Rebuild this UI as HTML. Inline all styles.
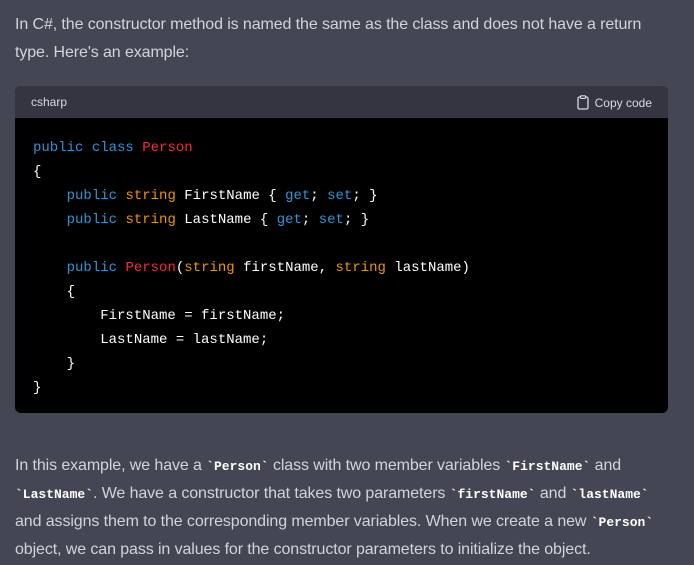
<!DOCTYPE html>
<html><head><meta charset="utf-8"><style>
html,body{margin:0;padding:0;width:694px;height:565px;overflow:hidden;background:#444654;}
.t{position:absolute;left:15px;font-family:"Liberation Sans",sans-serif;font-size:16px;color:#d1d5db;white-space:nowrap;letter-spacing:-0.1px;line-height:28px;}
.block{position:absolute;left:15px;top:86px;width:653px;height:327px;background:#000;border-radius:6px;overflow:hidden;}
.hdr{height:32px;background:#343541;position:relative;font-family:"Liberation Sans",sans-serif;font-size:12px;color:#d9d9e3;}
.hdr .l{position:absolute;left:16px;top:9px;}
.hdr .r{position:absolute;right:16px;top:9px;}
pre{margin:0;position:absolute;left:18px;top:50px;font-family:"Liberation Mono",monospace;font-size:14px;line-height:24px;color:#fff;}
.k{color:#2e95d3}.s{color:#e9950c}.c{color:#f22c3d}
code{font-family:"Liberation Mono",monospace;font-weight:bold;color:#fff;font-size:13px;letter-spacing:0;}
</style></head><body>
<div class="t" style="top:11px">In C#, the constructor method is named the same as the class and does not have a return</div>
<div class="t" style="top:39px">type. Here's an example:</div>
<div class="block">
<div class="hdr"><span class="l">csharp</span>
<span class="r"><svg width="12" height="15" viewBox="0 0 12 15" style="vertical-align:-3px;margin-right:6px"><rect x="1" y="2" width="10" height="12" rx="1.5" fill="none" stroke="#d9d9e3" stroke-width="1.3"/><rect x="3.5" y="0.8" width="5" height="2.6" rx="0.6" fill="#343541" stroke="#d9d9e3" stroke-width="1.1"/></svg>Copy code</span></div>
<pre><span class="k">public</span> <span class="k">class</span> <span class="c">Person</span>
{
    <span class="k">public</span> <span class="s">string</span> FirstName { <span class="k">get</span>; <span class="k">set</span>; }
    <span class="k">public</span> <span class="s">string</span> LastName { <span class="k">get</span>; <span class="k">set</span>; }

    <span class="k">public</span> <span class="c">Person</span>(<span class="s">string</span> firstName, <span class="s">string</span> lastName)
    {
        FirstName = firstName;
        LastName = lastName;
    }
}</pre>
</div>
<div class="t" style="top:452px">In this example, we have a <code>`Person`</code> class with two member variables <code>`FirstName`</code> and</div>
<div class="t" style="top:480px"><code>`LastName`</code>. We have a constructor that takes two parameters <code>`firstName`</code> and <code>`lastName`</code></div>
<div class="t" style="top:508px">and assigns them to the corresponding member variables. When we create a new <code>`Person`</code></div>
<div class="t" style="top:536px">object, we can pass in values for the constructor parameters to initialize the object.</div>
</body></html>
